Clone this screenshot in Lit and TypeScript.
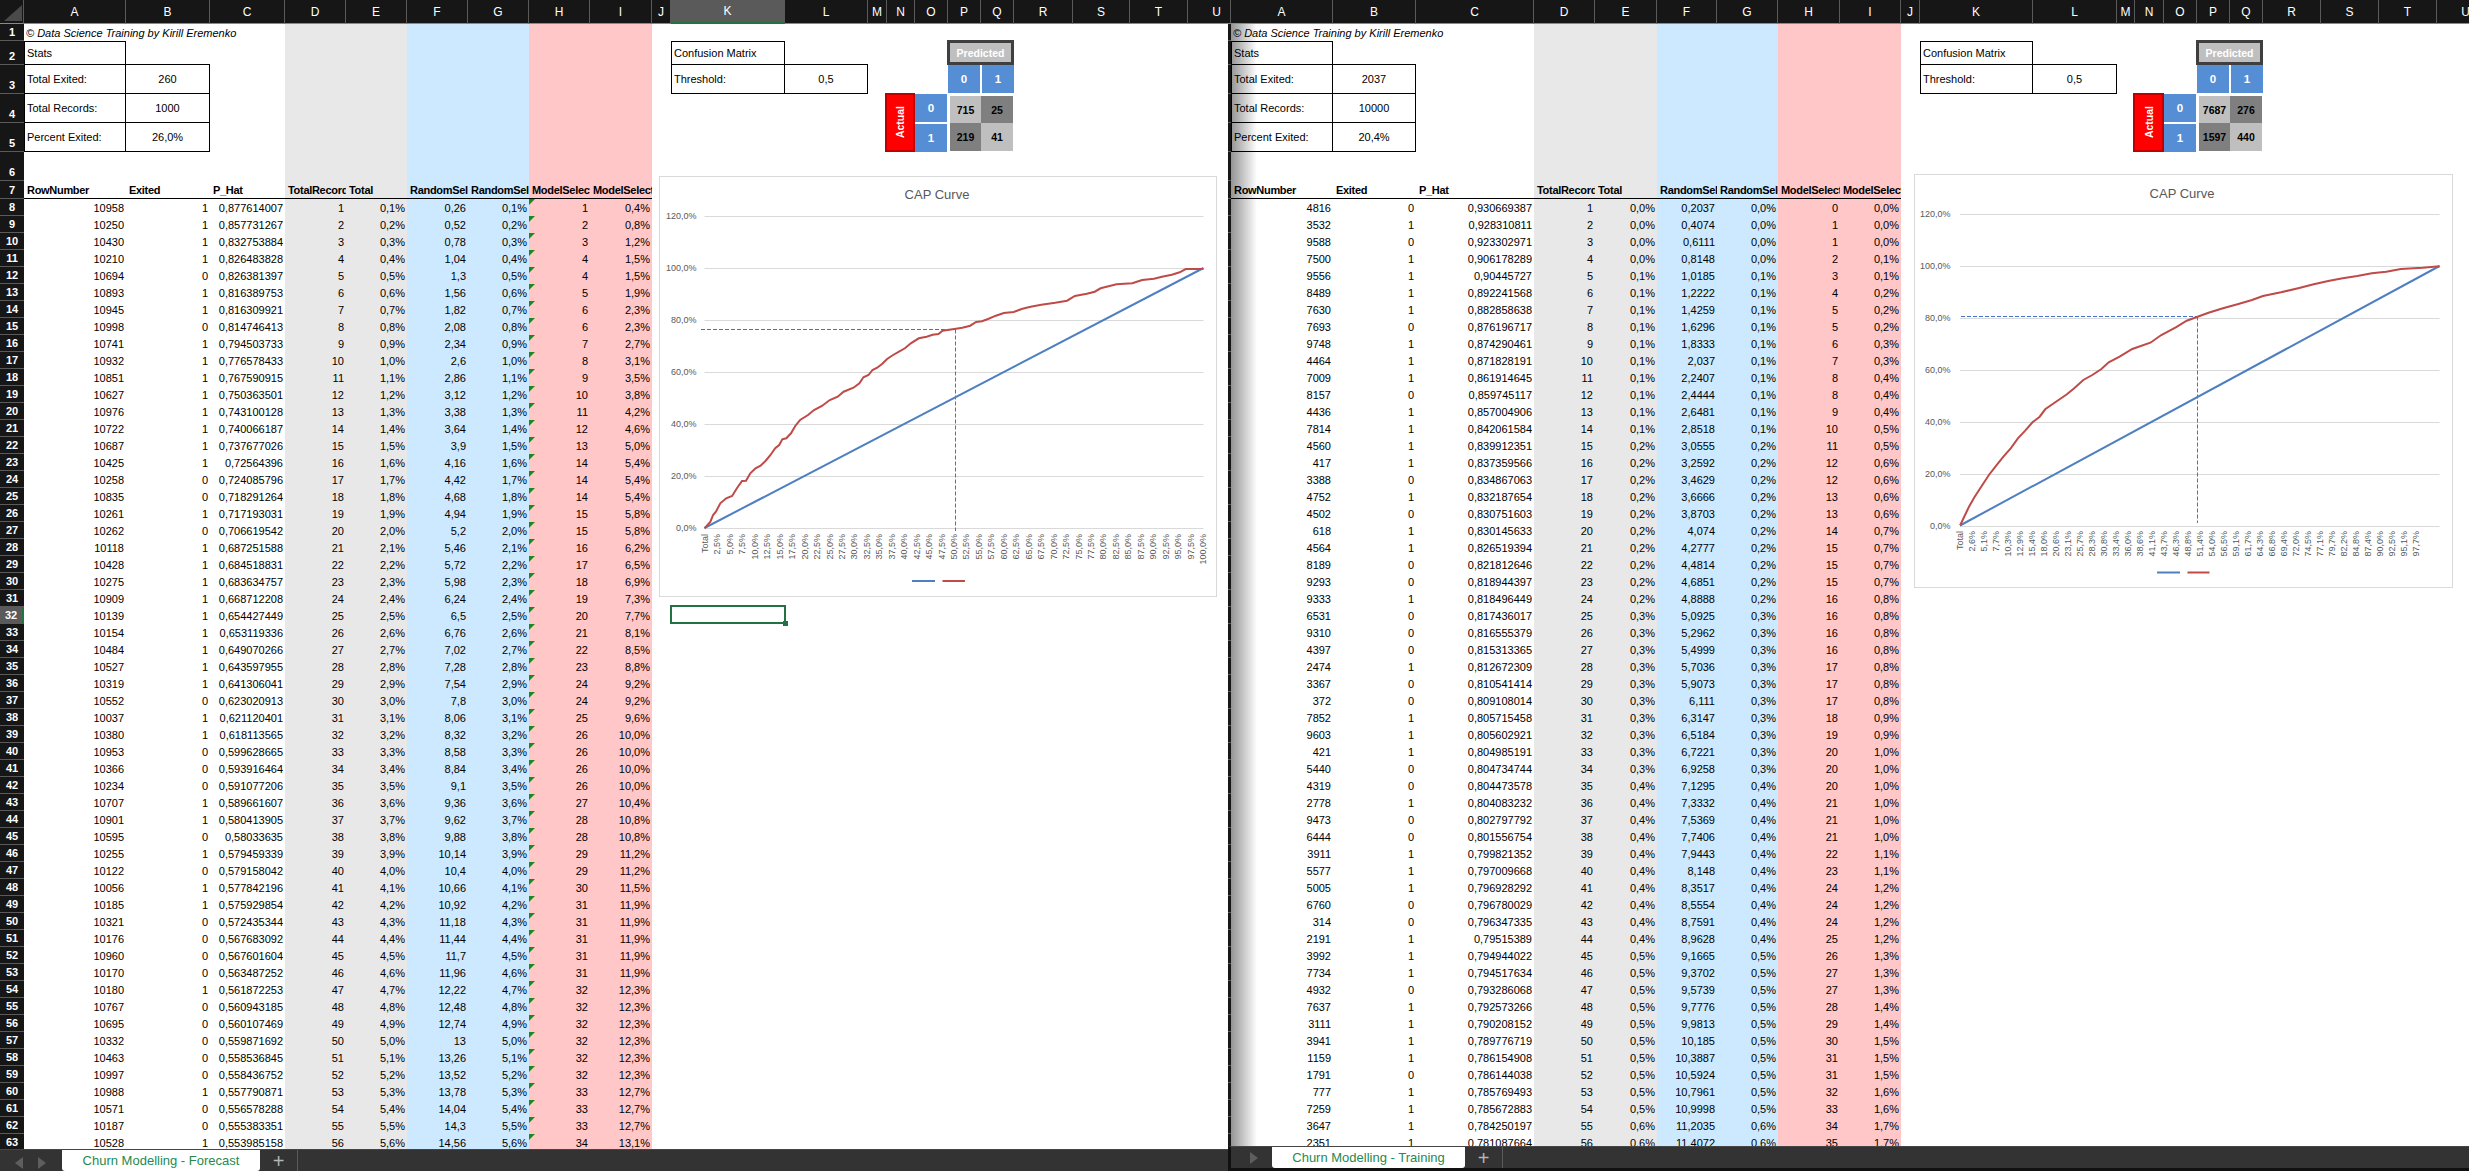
import { LitElement, html, css, svg } from 'lit';
import { customElement, property } from 'lit/decorators.js';

interface ChartConfig {
    x: number; y: number; w: number; h: number;
    titleX: number; titleY: number;
    plotX0: number; plotX1: number;
    y0: number; yStep: number;
    yLabelX: number;
    xLabels: string[]; xLabel0: number; xLabelStep: number; xLabelTop: number;
    legendBlue: number[]; legendRed: number[]; legendY: number;
    refX: number; refY: number; refX0: number; refY1: number;
    red: number[][];
}

interface SheetConfig {
    name: string;
    variant: string;
    left: number;
    widths: number[];
    rowNumbers: boolean;
    marks: boolean;
    selected: boolean;
    sheetName: string;
    stats: string[];
    matrix: string[];
    randomStep: number;
    total: number;
    exited: number;
    rows: string;
    chart: ChartConfig;
}

const COLS = 'ABCDEFGHIJKLMNOPQRSTU'.split('');

const pct = (v: number) => (Math.round(v * 1000 + 1e-9) / 10).toFixed(1).replace('.', ',') + '%';
const dec = (v: number) => String(parseFloat(v.toFixed(4))).replace('.', ',');

@customElement('cap-chart')
export class CapChart extends LitElement {
    @property({ attribute: false }) config!: ChartConfig;

    static styles = css`
        :host {
            display: block;
            position: absolute;
        }

        svg {
            display: block;
        }

        .title {
            font: 13px "Liberation Sans", sans-serif;
            fill: #595959;
            text-anchor: middle;
            dominant-baseline: central;
        }

        .axis {
            font: 9px "Liberation Sans", sans-serif;
            fill: #595959;
            text-anchor: end;
            dominant-baseline: central;
        }
    `;

    render() {
        const c = this.config;
        const grid = [0, 1, 2, 3, 4, 5, 6];
        const redPath = c.red.map(p => p.join(',')).join(' ');
        return html`
          <svg width="${c.w}" height="${c.h}" viewBox="${c.x} ${c.y} ${c.w} ${c.h}">
            <rect x="${c.x + 0.5}" y="${c.y + 0.5}" width="${c.w - 1}" height="${c.h - 1}" fill="#fff" stroke="#d9d9d9"></rect>
            <text class="title" x="${c.titleX}" y="${c.titleY}">CAP Curve</text>
            ${grid.map(k => {
                const y = Math.round(c.y0 - k * c.yStep) + 0.5;
                return svg`
                    <line x1="${c.plotX0}" x2="${c.plotX1}" y1="${y}" y2="${y}" stroke="#d9d9d9"></line>
                    <text class="axis" x="${c.yLabelX}" y="${y - 0.5}">${k * 20},0%</text>
                `;
            })}
            ${c.xLabels.map((t, i) => svg`
                <text class="axis" transform="translate(${c.xLabel0 + i * c.xLabelStep},${c.xLabelTop}) rotate(-90)">${t}</text>
            `)}
            <line x1="${c.refX0}" x2="${c.refX}" y1="${c.refY}" y2="${c.refY}" stroke="#4472c4" stroke-dasharray="4 2"></line>
            <line x1="${c.refX}" x2="${c.refX}" y1="${c.refY}" y2="${c.refY1}" stroke="#4472c4" stroke-dasharray="4 2"></line>
            <line x1="${c.plotX0}" y1="${c.y0}" x2="${c.plotX1}" y2="${c.y0 - 5 * c.yStep}" stroke="#4f7fc0" stroke-width="2"></line>
            <polyline points="${redPath}" fill="none" stroke="#be4b48" stroke-width="2"></polyline>
            <line x1="${c.legendBlue[0]}" x2="${c.legendBlue[1]}" y1="${c.legendY}" y2="${c.legendY}" stroke="#4f7fc0" stroke-width="2"></line>
            <line x1="${c.legendRed[0]}" x2="${c.legendRed[1]}" y1="${c.legendY}" y2="${c.legendY}" stroke="#be4b48" stroke-width="2"></line>
          </svg>
        `;
    }
}

@customElement('sheet-window')
export class SheetWindow extends LitElement {
    @property({ attribute: false }) config!: SheetConfig;

    static styles = css`
        :host {
            display: block;
            height: 100%;
            min-width: 0;
            font: 11px "Liberation Sans", Arial, sans-serif;
            color: #000;
        }

        .win {
            display: flex;
            flex-direction: column;
            height: 100%;
            overflow: hidden;
        }

        .colhdr {
            display: grid;
            grid-template-columns: var(--cols);
            height: 24px;
            flex: none;
            background: #161616;
        }

        .colhdr div {
            display: flex;
            align-items: center;
            justify-content: center;
            box-sizing: border-box;
            color: #fff;
            font-size: 12px;
            border-right: 1px solid #5a5a5a;
            border-bottom: 1px solid #8a8a8a;
        }

        .colhdr .corner {
            position: relative;
        }

        .colhdr .corner::after {
            content: "";
            position: absolute;
            left: 4px;
            top: 5px;
            width: 18px;
            height: 16px;
            background: #4a4a4a;
            clip-path: polygon(100% 0, 100% 100%, 0 100%);
        }

        .colhdr .active {
            background: #5a5a5a;
            border-bottom: 2px solid #217346;
        }

        .sheet {
            position: relative;
            flex: 1;
            min-height: 0;
            overflow: hidden;
            background: #fff;
        }

        .top {
            display: grid;
            grid-template-columns: var(--cols);
            grid-template-rows: 17px 24px 29px 29px 29px 29px 18px;
        }

        .row {
            display: grid;
            grid-template-columns: var(--cols);
            grid-auto-rows: 17px;
        }

        .gut {
            grid-column: gutter;
            display: flex;
            align-items: flex-end;
            justify-content: center;
            box-sizing: border-box;
            padding-bottom: 1px;
            overflow: hidden;
            background: #161616;
            color: #fff;
            font-size: 11px;
            font-weight: bold;
            line-height: 14px;
            border-bottom: 1px solid #5a5a5a;
        }

        .gut.active {
            background: #5a5a5a;
            border-right: 2px solid #217346;
        }

        .band {
            grid-row: 1 / 8;
        }

        .gray {
            background: #e8e8e8;
        }

        .blue {
            background: #cce9ff;
        }

        .pink {
            background: #ffc7c7;
        }

        .band.gray {
            grid-column: D / F;
        }

        .band.blue {
            grid-column: F / H;
        }

        .band.pink {
            grid-column: H / J;
        }

        .r1 { grid-row: 1; }
        .r2 { grid-row: 2; }
        .r3 { grid-row: 3; }
        .r4 { grid-row: 4; }
        .r5 { grid-row: 5; }
        .r6 { grid-row: 6; }
        .r7 { grid-row: 7; }

        .ca { grid-column: A; }
        .cb { grid-column: B; }
        .cc { grid-column: C; }
        .cd { grid-column: D; }
        .ce { grid-column: E; }
        .cf { grid-column: F; }
        .cg { grid-column: G; }
        .ch { grid-column: H; }
        .ci { grid-column: I; }
        .ck { grid-column: K; }
        .cl { grid-column: L; }
        .cn { grid-column: N; }
        .co { grid-column: O; }
        .cp { grid-column: P; }
        .cq { grid-column: Q; }

        .cell {
            display: flex;
            align-items: center;
            box-sizing: border-box;
            padding: 0 2px;
            min-width: 0;
            overflow: hidden;
            white-space: nowrap;
        }

        .num {
            justify-content: flex-end;
            text-align: right;
        }

        .center {
            justify-content: center;
        }

        .credit {
            grid-column: A / D;
            font-style: italic;
            overflow: visible;
        }

        .box {
            border: 1px solid #000;
        }

        .box-next {
            border: 1px solid #000;
            border-left: none;
            margin-top: -1px;
        }

        .box-below {
            border: 1px solid #000;
            border-top: none;
        }

        .head {
            grid-row: 7;
            font-weight: bold;
            letter-spacing: -0.3px;
            border-bottom: 1px solid #000;
            padding: 0 0 0 3px;
            align-items: center;
        }

        .predicted {
            grid-column: P / R;
            grid-row: 2;
            margin: -1px 0 0 -1px;
            border: 3px solid #3f3f3f;
            background: #bfbfbf;
            color: #fff;
            font-weight: bold;
            font-size: 10.5px;
        }

        .actual {
            grid-column: N;
            grid-row: 4 / 6;
            margin: -1px 0 0 -2px;
            border: 2px solid #c00000;
            background: #ff0000;
            color: #fff;
            font-weight: bold;
            font-size: 10.5px;
        }

        .actual span {
            writing-mode: vertical-rl;
            transform: rotate(180deg);
        }

        .hd {
            background: #558ed5;
            color: #fff;
            font-weight: bold;
            font-size: 11.5px;
        }

        .hd.cp {
            margin-right: 1px;
        }

        .hd.cq {
            margin-left: 1px;
        }

        .hd.r3 {
            margin-bottom: 1px;
        }

        .hd.co {
            margin-right: 1px;
        }

        .hd.r4 {
            margin-bottom: 1px;
        }

        .hd.r5 {
            margin-top: 1px;
        }

        .val {
            font-weight: bold;
            font-size: 10.5px;
            padding: 0;
        }

        .val.cp {
            margin-left: 2px;
        }

        .val.cq {
            margin-right: 1px;
        }

        .val.r4 {
            margin-top: 2px;
        }

        .val.r5 {
            margin-bottom: 1px;
        }

        .light {
            background: #bfbfbf;
        }

        .dark {
            background: #7f7f7f;
        }

        .mark {
            position: relative;
        }

        .mark::before {
            content: "";
            position: absolute;
            left: 0;
            top: 0;
            border-top: 6px solid #1b8a1b;
            border-right: 6px solid transparent;
        }

        .selected {
            position: relative;
            overflow: visible;
            z-index: 2;
        }

        .selected::after {
            content: "";
            position: absolute;
            inset: -2px -1px 0 -1px;
            border: 2px solid #217346;
        }

        .selected::before {
            content: "";
            position: absolute;
            right: -3px;
            bottom: -2px;
            width: 5px;
            height: 5px;
            background: #217346;
            z-index: 1;
        }

        .shade {
            position: absolute;
            top: 0;
            bottom: 0;
            left: 3px;
            width: 26px;
            background: linear-gradient(90deg, rgba(0, 0, 0, 0.42), rgba(0, 0, 0, 0));
            pointer-events: none;
        }

        .tabs {
            display: flex;
            flex: none;
            height: 22px;
            box-sizing: border-box;
            background: #333;
            border-top: 1px solid #454545;
        }

        .nav {
            display: flex;
            align-items: center;
            flex: none;
        }

        .nav svg {
            display: block;
            fill: #5e5e5e;
        }

        .tab {
            display: flex;
            align-items: center;
            justify-content: center;
            flex: none;
            background: #fff;
            color: #27894f;
            font-size: 13px;
            border-radius: 0 0 3px 3px;
        }

        .plus {
            display: flex;
            align-items: center;
            justify-content: center;
            flex: none;
            width: 38px;
            box-sizing: border-box;
            border-right: 1px solid #5a5a5a;
            color: #b5b5b5;
            font-size: 20px;
            line-height: 20px;
        }

        .main .nav {
            width: 62px;
            padding-left: 15px;
            box-sizing: border-box;
            gap: 15px;
            padding-top: 5px;
        }

        .main .tab {
            width: 198px;
        }

        .second .nav {
            width: 41px;
            padding: 0 0 0 19px;
            box-sizing: border-box;
        }

        .second .tab {
            width: 193px;
        }

        .second .tabs {
            border-left: 3px solid #111;
        }

        .second .foot {
            height: 3px;
            flex: none;
            background: #111;
        }
    `;

    render() {
        const c = this.config;
        const cols = '[gutter] ' + c.widths[0] + 'px ' + COLS.map((l, i) => `[${l}] ${c.widths[i + 1]}px`).join(' ');
        let seen = 0;
        const rows = c.rows.trim().split('\n').map((line, i) => {
            const [id, flag, hat] = line.trim().split(' ');
            seen += Number(flag);
            const n = i + 1;
            return { no: n + 7, n, id, flag, hat, model: seen };
        });

        return html`
          <div class="win ${c.variant}" style="--cols: ${cols}">
            <div class="colhdr">
                <div class="${c.rowNumbers ? 'corner' : ''}"></div>
                ${COLS.map(l => html`<div class="${c.selected && l === 'K' ? 'active' : ''}">${l}</div>`)}
            </div>
            <div class="sheet">
                <div class="top">
                    <div class="band gray"></div>
                    <div class="band blue"></div>
                    <div class="band pink"></div>
                    ${[1, 2, 3, 4, 5, 6, 7].map(r => html`<div class="gut r${r}">${c.rowNumbers ? r : ''}</div>`)}

                    <div class="cell credit r1">© Data Science Training by Kirill Eremenko</div>
                    <div class="cell ca r2 box">Stats</div>
                    <div class="cell ca r3 box-below">Total Exited:</div>
                    <div class="cell cb r3 box-next center">${c.stats[0]}</div>
                    <div class="cell ca r4 box-below">Total Records:</div>
                    <div class="cell cb r4 box-next center">${c.stats[1]}</div>
                    <div class="cell ca r5 box-below">Percent Exited:</div>
                    <div class="cell cb r5 box-next center">${c.stats[2]}</div>

                    <div class="cell ck r2 box">Confusion Matrix</div>
                    <div class="cell ck r3 box-below">Threshold:</div>
                    <div class="cell cl r3 box-next center">0,5</div>

                    <div class="cell center predicted">Predicted</div>
                    <div class="cell center hd cp r3">0</div>
                    <div class="cell center hd cq r3">1</div>
                    <div class="cell center actual"><span>Actual</span></div>
                    <div class="cell center hd co r4">0</div>
                    <div class="cell center hd co r5">1</div>
                    <div class="cell center val light cp r4">${c.matrix[0]}</div>
                    <div class="cell center val dark cq r4">${c.matrix[1]}</div>
                    <div class="cell center val dark cp r5">${c.matrix[2]}</div>
                    <div class="cell center val light cq r5">${c.matrix[3]}</div>

                    <div class="cell head ca">RowNumber</div>
                    <div class="cell head cb">Exited</div>
                    <div class="cell head cc">P_Hat</div>
                    <div class="cell head cd">TotalRecords</div>
                    <div class="cell head ce">Total</div>
                    <div class="cell head cf">RandomSelection</div>
                    <div class="cell head cg">RandomSelection</div>
                    <div class="cell head ch">ModelSelection</div>
                    <div class="cell head ci">ModelSelection</div>
                </div>

                ${rows.map(r => html`
                    <div class="row">
                        <div class="gut ${c.selected && r.no === 32 ? 'active' : ''}">${c.rowNumbers ? r.no : ''}</div>
                        <div class="cell num ca">${r.id}</div>
                        <div class="cell num cb">${r.flag}</div>
                        <div class="cell num cc">${r.hat}</div>
                        <div class="cell num cd gray">${r.n}</div>
                        <div class="cell num ce gray">${pct(r.n / c.total)}</div>
                        <div class="cell num cf blue">${dec(r.n * c.randomStep)}</div>
                        <div class="cell num cg blue">${pct(r.n / c.total)}</div>
                        <div class="cell num ch pink ${c.marks ? 'mark' : ''}">${r.model}</div>
                        <div class="cell num ci pink">${pct(r.model / c.exited)}</div>
                        ${c.selected && r.no === 32 ? html`<div class="cell ck selected"></div>` : ''}
                    </div>
                `)}

                <cap-chart
                    .config="${c.chart}"
                    style="left: ${c.chart.x - c.left}px; top: ${c.chart.y - 24}px"
                ></cap-chart>
                ${c.variant === 'second' ? html`<div class="shade"></div>` : ''}
            </div>
            <div class="tabs">
                <div class="nav">
                    ${c.variant === 'main' ? html`
                        <svg width="8" height="12" viewBox="0 0 8 12"><path d="M8 0v12L0 6z"></path></svg>
                    ` : ''}
                    <svg width="8" height="12" viewBox="0 0 8 12"><path d="M0 0v12l8-6z"></path></svg>
                </div>
                <div class="tab">${c.sheetName}</div>
                <div class="plus">+</div>
            </div>
            <div class="foot"></div>
          </div>
        `;
    }
}

// rows are "id exited p_hat", the remaining columns are worked out from them
const FORECAST_ROWS = `
10958 1 0,877614007
10250 1 0,857731267
10430 1 0,832753884
10210 1 0,826483828
10694 0 0,826381397
10893 1 0,816389753
10945 1 0,816309921
10998 0 0,814746413
10741 1 0,794503733
10932 1 0,776578433
10851 1 0,767590915
10627 1 0,750363501
10976 1 0,743100128
10722 1 0,740066187
10687 1 0,737677026
10425 1 0,72564396
10258 0 0,724085796
10835 0 0,718291264
10261 1 0,717193031
10262 0 0,706619542
10118 1 0,687251588
10428 1 0,684518831
10275 1 0,683634757
10909 1 0,668712208
10139 1 0,654427449
10154 1 0,653119336
10484 1 0,649070266
10527 1 0,643597955
10319 1 0,641306041
10552 0 0,623020913
10037 1 0,621120401
10380 1 0,618113565
10953 0 0,599628665
10366 0 0,593916464
10234 0 0,591077206
10707 1 0,589661607
10901 1 0,580413905
10595 0 0,58033635
10255 1 0,579459339
10122 0 0,579158042
10056 1 0,577842196
10185 1 0,575929854
10321 0 0,572435344
10176 0 0,567683092
10960 0 0,567601604
10170 0 0,563487252
10180 1 0,561872253
10767 0 0,560943185
10695 0 0,560107469
10332 0 0,559871692
10463 0 0,558536845
10997 0 0,558436752
10988 1 0,557790871
10571 0 0,556578288
10187 0 0,555383351
10528 1 0,553985158
`;

const TRAINING_ROWS = `
4816 0 0,930669387
3532 1 0,928310811
9588 0 0,923302971
7500 1 0,906178289
9556 1 0,90445727
8489 1 0,892241568
7630 1 0,882858638
7693 0 0,876196717
9748 1 0,874290461
4464 1 0,871828191
7009 1 0,861914645
8157 0 0,859745117
4436 1 0,857004906
7814 1 0,842061584
4560 1 0,839912351
417 1 0,837359566
3388 0 0,834867063
4752 1 0,832187654
4502 0 0,830751603
618 1 0,830145633
4564 1 0,826519394
8189 0 0,821812646
9293 0 0,818944397
9333 1 0,818496449
6531 0 0,817436017
9310 0 0,816555379
4397 0 0,815313365
2474 1 0,812672309
3367 0 0,810541414
372 0 0,809108014
7852 1 0,805715458
9603 1 0,805602921
421 1 0,804985191
5440 0 0,804734744
4319 0 0,804473578
2778 1 0,804083232
9473 0 0,802797792
6444 0 0,801556754
3911 1 0,799821352
5577 1 0,797009668
5005 1 0,796928292
6760 0 0,796780029
314 0 0,796347335
2191 1 0,79515389
3992 1 0,794944022
7734 1 0,794517634
4932 0 0,793286068
7637 1 0,792573266
3111 1 0,790208152
3941 1 0,789776719
1159 1 0,786154908
1791 0 0,786144038
777 1 0,785769493
7259 1 0,785672883
3647 1 0,784250197
2351 1 0,781087664
`;

// curve traced off the reference, in plot-space x / y pairs
const traceLeft = [163,1105, 178,1085, 185,1065, 192,1055, 203,1030, 218,1015, 233,1008, 245,985, 258,963, 268,962, 279,940, 292,925, 305,917, 318,902, 330,885, 342,865, 352,855, 360,838, 370,835, 382,820, 393,797, 405,780, 425,765, 440,750, 460,738, 480,720, 500,710, 515,695, 540,683, 555,670, 565,652, 578,645, 588,630, 600,623, 612,612, 625,597, 640,585, 655,575, 670,565, 685,550, 705,535, 725,530, 740,524, 755,522, 765,512, 795,507, 815,503, 835,497, 850,486, 865,484, 880,477, 900,467, 920,459, 945,456, 965,447, 985,441, 1015,434, 1050,428, 1080,422, 1100,408, 1130,401, 1150,395, 1165,385, 1185,379, 1205,373, 1245,370, 1270,360, 1300,356, 1320,350, 1345,344, 1365,337, 1380,327, 1425,327];
const traceRight = [166,1096, 175,1075, 190,1040, 205,1012, 225,978, 245,945, 265,917, 285,890, 305,865, 325,835, 345,812, 365,787, 385,770, 400,748, 430,725, 460,703, 480,685, 505,660, 530,645, 555,627, 575,607, 605,590, 640,567, 690,548, 720,525, 760,502, 790,482, 820,470, 850,458, 890,445, 930,433, 970,420, 1000,408, 1050,397, 1100,384, 1140,373, 1180,363, 1220,355, 1260,348, 1300,340, 1340,335, 1380,327, 1440,323, 1487,319];

const toPage = (trace: number[], x0: number, sx: number) => {
    const pts: number[][] = [];
    for (let i = 0; i < trace.length; i += 2) {
        pts.push([+(x0 + trace[i] * sx).toFixed(1), +(160 + trace[i + 1] / 3).toFixed(1)]);
    }
    return pts;
};

const labels = (count: number, step: number) => {
    const out = ['Total'];
    for (let k = 1; k < count; k++) {
        out.push((k * step + 1e-6).toFixed(1).replace('.', ',') + '%');
    }
    return out;
};

const FORECAST: SheetConfig = {
    name: 'forecast',
    variant: 'main',
    left: 0,
    widths: [24, 102, 84, 75, 61, 61, 61, 61, 61, 62, 19, 114, 83, 19, 28, 33, 33, 33, 59, 57, 58, 58],
    rowNumbers: true,
    marks: true,
    selected: true,
    sheetName: 'Churn Modelling - Forecast',
    stats: ['260', '1000', '26,0%'],
    matrix: ['715', '25', '219', '41'],
    randomStep: 0.26,
    total: 1000,
    exited: 260,
    rows: FORECAST_ROWS,
    chart: {
        x: 659, y: 176, w: 558, h: 421,
        titleX: 937, titleY: 194,
        plotX0: 704.5, plotX1: 1203.5,
        y0: 528, yStep: 52,
        yLabelX: 696.5,
        xLabels: labels(41, 2.5), xLabel0: 705, xLabelStep: 12.45, xLabelTop: 534,
        legendBlue: [912, 935], legendRed: [942.5, 965], legendY: 581,
        refX: 955.5, refY: 329.5, refX0: 701, refY1: 531,
        red: toPage(traceLeft, 640, 0.3954),
    },
};

const TRAINING: SheetConfig = {
    name: 'training',
    variant: 'second',
    left: 1228,
    widths: [3, 102, 83, 118, 61, 62, 60, 61, 62, 61, 19, 113, 84, 18, 29, 33, 33, 33, 58, 58, 58, 58],
    rowNumbers: false,
    marks: false,
    selected: false,
    sheetName: 'Churn Modelling - Training',
    stats: ['2037', '10000', '20,4%'],
    matrix: ['7687', '276', '1597', '440'],
    randomStep: 0.2037,
    total: 10000,
    exited: 2037,
    rows: TRAINING_ROWS,
    chart: {
        x: 1914, y: 174, w: 539, h: 414,
        titleX: 2182, titleY: 193,
        plotX0: 1960, plotX1: 2439.5,
        y0: 525.5, yStep: 51.9,
        yLabelX: 1950.5,
        xLabels: labels(39, 2.57), xLabel0: 1960, xLabelStep: 12.0, xLabelTop: 531,
        legendBlue: [2157, 2180], legendRed: [2187.5, 2209.5], legendY: 572.5,
        refX: 2197.5, refY: 316.5, refX0: 1961, refY1: 523,
        red: toPage(traceRight, 1900, 0.3629),
    },
};

@customElement('app-root')
export class AppRoot extends LitElement {
    static styles = css`
        :host {
            display: block;
            height: 1171px;
            background: #000;
            overflow: hidden;
        }

        .windows {
            display: grid;
            grid-template-columns: 1228px minmax(0, 1fr);
            grid-template-rows: minmax(0, 1fr);
            height: 100%;
        }
    `;

    render() {
        return html`
          <div class="windows">
            <sheet-window .config="${FORECAST}"></sheet-window>
            <sheet-window .config="${TRAINING}"></sheet-window>
          </div>
        `;
    }
}
